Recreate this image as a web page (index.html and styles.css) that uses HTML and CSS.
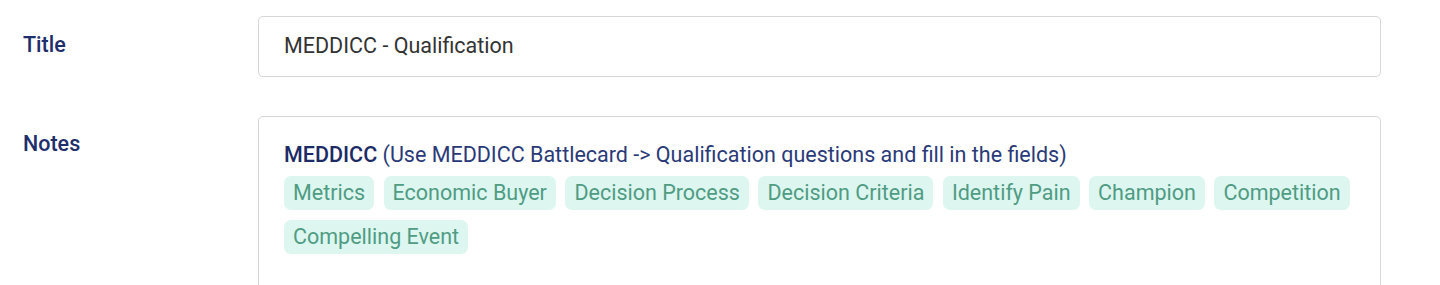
FILE: index.html
```html
<!DOCTYPE html>
<html lang="en">
<head>
    <meta charset="UTF-8">
    <title>Template</title>
    <link rel="stylesheet" href="styles.css">
</head>
<body>
    <div class="form">
        <div class="row row-title">
            <label class="label">Title</label>
            <div class="field input">MEDDICC - Qualification</div>
        </div>
        <div class="row row-notes">
            <label class="label">Notes</label>
            <div class="field notes">
                <p class="intro"><strong>MEDDICC</strong> (Use MEDDICC Battlecard -&gt; Qualification questions and fill in the fields)</p>
                <div class="chips">
                    <span class="chip">Metrics</span>
                    <span class="chip">Economic Buyer</span>
                    <span class="chip">Decision Process</span>
                    <span class="chip">Decision Criteria</span>
                    <span class="chip">Identify Pain</span>
                    <span class="chip">Champion</span>
                    <span class="chip">Competition</span>
                    <span class="chip">Compelling Event</span>
                </div>
            </div>
        </div>
    </div>
</body>
</html>
```

FILE: styles.css
```css
body, html {
    margin: 0;
    padding: 0;
    background: #fff;
    font-family: Roboto, "Liberation Sans", sans-serif;
}
.form {
    padding: 16px 59px 0 23px;
}
.row {
    display: flex;
    align-items: flex-start;
}
.row-notes {
    margin-top: 39px;
}
.label {
    width: 235px;
    flex-shrink: 0;
    font-size: 21.5px;
    font-weight: 500;
    color: #1f2f6c;
    padding-top: 16px;
}
.row-notes .label {
    padding-top: 15px;
}
.field {
    flex: 1;
    border: 1.5px solid #d6d6d6;
    border-radius: 5px;
    background: #fff;
    box-sizing: border-box;
}
.input {
    height: 61px;
    padding: 0 25px;
    display: flex;
    align-items: center;
    font-size: 21.5px;
    color: #333;
    padding-bottom: 2px;
}
.notes {
    min-height: 220px;
    padding: 26px 25px;
}
.intro {
    margin: 0;
    font-size: 21.5px;
    color: #2a3a78;
    line-height: 24px;
}
.intro strong {
    font-weight: 500;
    color: #1c2a66;
}
.chips {
    display: flex;
    flex-wrap: wrap;
    gap: 10px 9.5px;
    margin-top: 9px;
}
.chip {
    background: #ddf6f0;
    color: #4f9c83;
    font-size: 21.5px;
    line-height: 34px;
    padding: 0 9px;
    border-radius: 7px;
}
```
